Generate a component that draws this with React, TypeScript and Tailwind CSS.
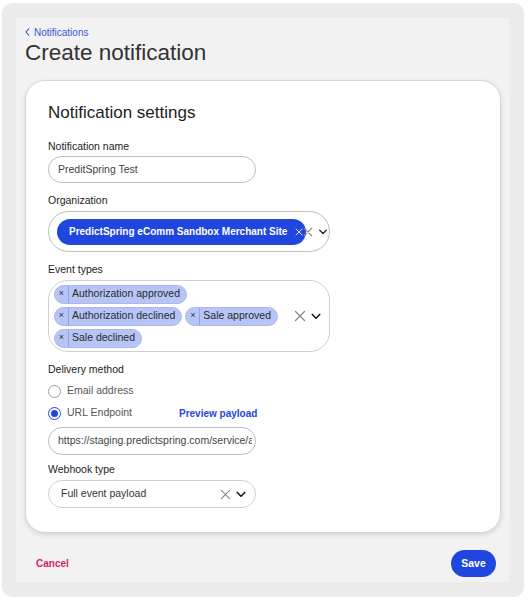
import React from "react";

const font = { fontFamily: "'Liberation Sans', Arial, sans-serif" };

function XIcon({ className = "" }: { className?: string }) {
  return (
    <svg viewBox="0 0 12 12" className={className} fill="none" stroke="currentColor" strokeWidth="1.3" strokeLinecap="round">
      <path d="M1.5 1.5l9 9M10.5 1.5l-9 9" />
    </svg>
  );
}

function Chevron({ className = "" }: { className?: string }) {
  return (
    <svg viewBox="0 0 12 8" className={className} fill="none" stroke="currentColor" strokeWidth="1.8" strokeLinecap="round" strokeLinejoin="round">
      <path d="M1.5 1.5l4.5 4.5 4.5-4.5" />
    </svg>
  );
}

function Chip({ label }: { label: string }) {
  return (
    <div className="flex h-[19px] shrink-0 items-center whitespace-nowrap rounded-full border border-[#a9b9f0] bg-[#b6c5f6] text-[10.5px] text-[#2a2a2a]">
      <span className="flex h-full w-[14px] items-center justify-center border-r border-[#8fa3e6] text-[9px] text-[#333]">
        ×
      </span>
      <span className="pl-[3px] pr-[6px]">{label}</span>
    </div>
  );
}

export default function App() {
  return (
    <div className="h-[600px] w-[528px] bg-white pl-[2px] pr-[4px] pt-[3px] pb-[3px]" style={font}>
      <div className="h-[594px] rounded-[10px] bg-[#ebebeb] px-[14px] py-[15px]">
        <div className="flex h-[564px] flex-col bg-[#f2f2f2] px-[9px]">
          <div className="mt-[7px] flex h-[14px] items-center text-[10px] text-[#3d55d6]">
            <svg viewBox="0 0 6 10" className="mr-[4px] h-[8px] w-[5px]" fill="none" stroke="currentColor" strokeWidth="1.4" strokeLinecap="round" strokeLinejoin="round">
              <path d="M4.5 1L1 5l3.5 4" />
            </svg>
            Notifications
          </div>
          <div className="mt-[1px] h-[26px] text-[22.5px] leading-[26px] text-[#333]">Create notification</div>
          <div className="mt-[14px] h-[453px] rounded-[20px] border border-[#d6d6d6] bg-white px-[22px] pt-[22px] shadow-[0_2px_5px_rgba(0,0,0,0.12)]">
            <div className="h-[20px] text-[17px] leading-[20px] text-[#222]">Notification settings</div>

            <div className="mt-[16px] h-[14px] text-[10.5px] leading-[14px] text-[#222]">Notification name</div>
            <div className="mt-[3px] flex h-[27px] w-[208px] items-center rounded-full border border-[#bdbdbd] px-[9px] text-[10.5px] text-[#444]">
              PreditSpring Test
            </div>

            <div className="mt-[10px] h-[14px] text-[10.5px] leading-[14px] text-[#222]">Organization</div>
            <div className="mt-[4px] flex h-[41px] w-[282px] items-center rounded-full border border-[#bdbdbd] pl-[8px]">
              <div className="flex h-[26px] w-[249px] shrink-0 items-center whitespace-nowrap rounded-full bg-[#1f47e0] pl-[12px] text-[10px] font-bold text-white">
                PredictSpring eComm Sandbox Merchant Site
                <XIcon className="ml-[8px] h-[8px] w-[8px] text-white" />
              </div>
              <XIcon className="-ml-[3px] h-[10px] w-[10px] text-[#8a8a8a]" />
              <Chevron className="ml-[5px] h-[6px] w-[10px] text-[#222]" />
            </div>

            <div className="mt-[10px] h-[14px] text-[10.5px] leading-[14px] text-[#222]">Event types</div>
            <div className="mt-[4px] flex h-[72px] w-[282px] items-center rounded-[20px] border border-[#d0d0d0] pl-[5px]">
              <div className="flex w-[234px] shrink-0 flex-col gap-y-[3px]">
                <div className="flex">
                  <Chip label="Authorization approved" />
                </div>
                <div className="flex gap-x-[3px]">
                  <Chip label="Authorization declined" />
                  <Chip label="Sale approved" />
                </div>
                <div className="flex">
                  <Chip label="Sale declined" />
                </div>
              </div>
              <XIcon className="ml-[6px] h-[12px] w-[12px] text-[#8a8a8a]" />
              <Chevron className="ml-[5px] h-[7px] w-[10px] text-[#111]" />
            </div>

            <div className="mt-[10px] h-[14px] text-[10.5px] leading-[14px] text-[#222]">Delivery method</div>
            <div className="mt-[8px] flex h-[14px] items-center text-[10.5px] text-[#555]">
              <span className="mr-[6px] h-[13px] w-[13px] rounded-full border border-[#9a9a9a] bg-white" />
              Email address
            </div>
            <div className="mt-[8px] flex h-[14px] items-center text-[10.5px] text-[#555]">
              <span className="mr-[6px] flex h-[13px] w-[13px] items-center justify-center rounded-full border border-[#1f47e0] bg-white">
                <span className="h-[7px] w-[7px] rounded-full bg-[#1f47e0]" />
              </span>
              URL Endpoint
              <span className="ml-[47px] text-[10px] font-bold text-[#1f47e0]">Preview payload</span>
            </div>
            <div className="mt-[7px] flex h-[28px] w-[208px] items-center overflow-hidden whitespace-nowrap rounded-full border border-[#bdbdbd] pl-[9px] text-[10.5px] text-[#444]">
              <span className="w-[194px] shrink-0 overflow-hidden">https://staging.predictspring.com/service/a</span>
            </div>

            <div className="mt-[7px] h-[14px] text-[10.5px] leading-[14px] text-[#222]">Webhook type</div>
            <div className="mt-[4px] flex h-[28px] w-[208px] items-center rounded-full border border-[#d0d0d0] pl-[12px] text-[10.5px] text-[#333]">
              <span className="flex-1">Full event payload</span>
              <XIcon className="h-[11px] w-[11px] text-[#8a8a8a]" />
              <Chevron className="ml-[5px] mr-[9px] h-[7px] w-[10px] text-[#111]" />
            </div>
          </div>
          <div className="mt-[17px] flex items-center justify-between pl-[11px] pr-[5px]">
            <span className="text-[10px] font-bold text-[#d3245a]">Cancel</span>
            <button className="flex h-[27px] w-[45px] items-center justify-center rounded-full bg-[#1f47e0] text-[10.5px] font-bold text-white">
              Save
            </button>
          </div>
        </div>
      </div>
    </div>
  );
}
